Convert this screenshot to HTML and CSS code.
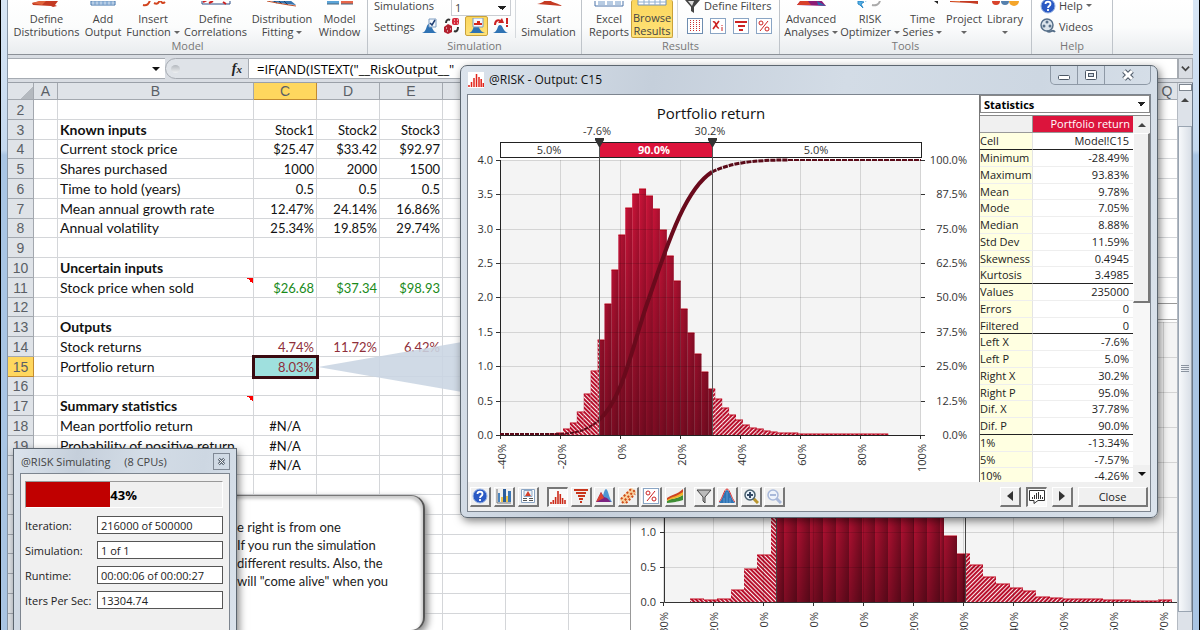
FILE: index.html
```html
<!DOCTYPE html>
<html lang="en">
  <head>
    <meta charset="UTF-8" />
    <title>@RISK - Output: C15</title>
    <link rel="stylesheet" href="styles.css">
  </head>

  <body>
    <div class="app">
      <header class="ribbon">
        <section class="group">
          <div class="group-body model-grid">
            <button class="big">
              <svg class="big-icon" viewBox="0 0 40 11"><path d="M5 2l8-2h18l-3 4 2 1-4 1-2-1-18-1z" fill="#c43a22"/><path d="M5 2l8-2h6l-4 4z" fill="#e0643c"/></svg>
              Define<br>Distributions
            </button>
            <button class="big">
              <svg class="big-icon" viewBox="0 0 40 11"><path d="M8 0h24v4H8z" fill="#fff" stroke="#3b6ea8"/><path d="M12 0v4m4-4v4m4-4v4m4-4v4m4-4v4M8 2h24" stroke="#6d9acb"/></svg>
              Add<br>Output
            </button>
            <button class="big">
              <svg class="big-icon" viewBox="0 0 40 11"><path d="M10 4c4 1 6-1 7-5M21 2c4 2 5-1 6-3m1 0c0 3 2 4 4 2" fill="none" stroke="#d2441f" stroke-width="2"/></svg>
              Insert<br>Function <i class="caret"></i>
            </button>
            <button class="big">
              <svg class="big-icon" viewBox="0 0 40 11"><path d="M6-1v4h28v-4" fill="#fff" stroke="#2f4f86"/><path d="M7 1l4-2m2 3l4-2m10 1l3 2" stroke="#c22" stroke-width="2"/></svg>
              Define<br>Correlations
            </button>
            <button class="big">
              <svg class="big-icon" viewBox="0 0 40 11"><path d="M6-1h22l6 5-10-1-12-2z" fill="#3776b0"/><path d="M12 0l3 2m2-2l3 3m2-3l4 4" stroke="#193f6b"/><path d="M5 0l10 2 12 2 7 1" fill="none" stroke="#c0522b"/></svg>
              Distribution<br>Fitting <i class="caret"></i>
            </button>
            <button class="big">
              <svg class="big-icon" viewBox="0 0 40 11"><path d="M7-1h12v4H7z" fill="#5ba4d8"/><path d="M21-1h12v4H21z" fill="#e8674b"/><path d="M7 3h12m2 0h12" stroke="#49667f"/></svg>
              Model<br>Window
            </button>
          </div>
          <h2>Model</h2>
        </section>

        <section class="group">
          <div class="group-body">
            <div class="stack sim-stack">
              <div class="line">
                <label for="simulations">Simulations</label>
                <select id="simulations"><option>1</option></select>
              </div>
              <div class="line">
                <button class="small">Settings</button>
                <div class="icon-row">
                  <button class="mini" aria-label="Simulation settings"><svg viewBox="0 0 16 16"><path d="M1 15c5-1 4-9 7-9s3 8 8 9z" fill="#2f73b4"/><path d="M8 1h7v8H8z" fill="#f4f9ff" stroke="#7c9cc0"/><path d="M9 5l2 2 3-5" fill="none" stroke="#1f3f74" stroke-width="1.5"/></svg></button>
                  <button class="mini" aria-label="Random or static"><svg viewBox="0 0 16 16"><rect x="8" y="0" width="7" height="7" rx="2" fill="#d5283a"/><path d="M10 2h1m2 0h1m-4 3h1m2 0h1" stroke="#fff"/><path d="M0 9l4-3 4 2v6l-4 2-4-2z" fill="#b3202e"/><path d="M2 10h1m0 3h1m2-2h1" stroke="#fff"/><path d="M2 5c0-3 2-4 4-3M14 9c0 4-2 5-4 4" fill="none" stroke="#333" stroke-width="2"/></svg></button>
                  <button class="mini on" aria-label="Show graph during simulation"><svg viewBox="0 0 16 16"><path d="M0 15c5-1 4-9 7-9s3 8 9 9z" fill="#2f73b4"/><path d="M4 0h10v9H4z" fill="#f4f9ff" stroke="#7c9cc0"/><path d="M5 7h8V5h-2V3H8v2H5z" fill="#d42a1e"/></svg></button>
                  <button class="mini" aria-label="Demo mode"><svg viewBox="0 0 16 16"><path d="M0 15c5-1 4-8 7-8s3 7 8 8z" fill="#2f73b4"/><path d="M2 7c0-5 4-6 6-3" fill="none" stroke="#c22" stroke-width="2"/><path d="M5 5h6L9 0z" fill="#c22"/><path d="M14 0v6m0 1v2" stroke="#c22" stroke-width="2"/></svg></button>
                </div>
              </div>
            </div>
            <button class="big start">
              <svg class="big-icon" viewBox="0 0 40 11"><path d="M8 3c4-1 7-2 8-4h5c2 3 8 3 12 6-8-1-16-1-25-2z" fill="#c43a22"/></svg>
              Start<br>Simulation
            </button>
          </div>
          <h2>Simulation</h2>
        </section>

        <section class="group">
          <div class="group-body">
            <div class="results-grid">
              <button class="big">
                <svg class="big-icon" viewBox="0 0 40 11"><path d="M6-1h28v6H6z" fill="#fff" stroke="#4a73a8"/><path d="M9 1h7m2 0h6m2 0h6M9 3h7m2 0h6m2 0h6" stroke="#6f97c6"/></svg>
                Excel<br>Reports
              </button>
              <button class="big on">
                <svg class="big-icon" viewBox="0 0 40 11"><path d="M6-1h28v6H6z" fill="#fff" stroke="#7391b5"/><path d="M6 2h28M12 0v5m5-5v5m6-5v5m5-5v5" stroke="#8faed0"/></svg>
                Browse<br>Results
              </button>
            </div>
            <div class="stack filter-stack">
              <div class="line">
                <button class="small"><svg viewBox="0 0 16 16"><path d="M0 2h15L9 9v6l-3-2V9z" fill="#444"/><path d="M3 3h6L7 8z" fill="#ddd"/></svg>Define Filters</button>
              </div>
              <div class="line icon-row">
                <button class="mini" aria-label="Data"><svg viewBox="0 0 16 16"><rect x=".5" y=".5" width="15" height="15" fill="#fff" stroke="#6e8db0"/><path d="M3.500 2v12m3-12v12m3-12v12m3-12v12" stroke="#c33" stroke-dasharray="1 1"/></svg></button>
                <button class="mini" aria-label="Variables"><svg viewBox="0 0 16 16"><rect x=".5" y=".5" width="15" height="15" fill="#fff" stroke="#8aa5c4"/><path d="M3 4c3-2 3 7 6 6M9 3L3 11" fill="none" stroke="#c22" stroke-width="1.600"/><path d="M12 9v4m0-6v1" stroke="#c22"/></svg></button>
                <button class="mini" aria-label="Tornado"><svg viewBox="0 0 16 16"><rect x=".5" y=".5" width="15" height="15" fill="#fff" stroke="#8aa5c4"/><path d="M2 4h12M5 8h7M6 12h4" stroke="#c22" stroke-width="2"/></svg></button>
                <button class="mini" aria-label="Percentiles"><svg viewBox="0 0 16 16"><rect x=".5" y=".5" width="15" height="15" fill="#fff" stroke="#8aa5c4"/><path d="M12 3L4 13" stroke="#c22"/><circle cx="5" cy="5" r="2" fill="none" stroke="#c22"/><circle cx="11" cy="11" r="2" fill="none" stroke="#c22"/></svg></button>
              </div>
            </div>
          </div>
          <h2>Results</h2>
        </section>

        <section class="group">
          <div class="group-body tools-grid">
            <button class="big">
              <svg class="big-icon" viewBox="0 0 40 11"><path d="M6 4l4-5h20l5 6z" fill="#8d1c76"/><path d="M6 4l4-5h6l4 5z" fill="#d8402a"/><path d="M26 0l9 5-8-1z" fill="#2b66ad"/></svg>
              Advanced<br>Analyses <i class="caret"></i>
            </button>
            <button class="big">
              <svg class="big-icon" viewBox="0 0 40 11"><path d="M8 0l6 1-3 2 2 4-3-3-2-1zM15 0l4-1" stroke="#2d8ac9" fill="#56b0e4"/><path d="M22 4c4 1 7-1 8-4" fill="none" stroke="#aaa" stroke-width="2"/></svg>
              RISK<br>Optimizer <i class="caret"></i>
            </button>
            <button class="big">
              <svg class="big-icon" viewBox="0 0 40 11"><path d="M31 0l4-1v4z" fill="#222"/></svg>
              Time<br>Series <i class="caret"></i>
            </button>
            <button class="big">
              <svg class="big-icon" viewBox="0 0 40 11"><path d="M6 0h28v3l-8-1-20-1z" fill="#c43a22"/><path d="M6 0h10v1z" fill="#f08a4a"/></svg>
              Project<br><i class="caret"></i>
            </button>
            <button class="big">
              <svg class="big-icon" viewBox="0 0 40 11"><circle cx="11" cy="0" r="4" fill="#d8432c"/><circle cx="20" cy="0" r="4" fill="#5580ad"/><circle cx="29" cy="0" r="5" fill="#f4a52a"/></svg>
              Library<br><i class="caret"></i>
            </button>
          </div>
          <h2>Tools</h2>
        </section>

        <section class="group">
          <div class="group-body">
            <div class="stack help-stack">
              <div class="line">
                <button class="small"><svg viewBox="0 0 16 16"><circle cx="8" cy="8" r="7" fill="#2a59c4" stroke="#9ab5e4"/><path d="M5.500 6c0-3 5-3 5 0 0 2-2.500 2-2.500 4m0 1v2" fill="none" stroke="#fff" stroke-width="1.800"/></svg>Help <i class="caret"></i></button>
              </div>
              <div class="line">
                <button class="small"><svg viewBox="0 0 16 16"><circle cx="7" cy="7" r="6" fill="#dbe4ec" stroke="#57708a" stroke-width="1.500"/><circle cx="7" cy="4" r="1.500" fill="#57708a"/><circle cx="4" cy="8" r="1.500" fill="#57708a"/><circle cx="10" cy="8" r="1.500" fill="#57708a"/><path d="M7 13c4 3 5-3 8 1" fill="none" stroke="#57708a" stroke-width="2"/></svg>Videos</button>
              </div>
            </div>
          </div>
          <h2>Help</h2>
        </section>
      </header>

      <div class="formula-bar">
        <div class="name-box"><input type="text" aria-label="Name box"><i class="caret dark"></i></div>
        <div class="fx"><span class="knob"></span><em>f<small>x</small></em></div>
        <input class="formula" type="text" aria-label="Formula" value="=IF(AND(ISTEXT(&quot;__RiskOutput__&quot;">
        <button class="expand" aria-label="Expand formula bar"><svg viewBox="0 0 10 10"><path d="M1 3l4 4 4-4" fill="none" stroke="#444" stroke-width="2"/></svg></button>
      </div>

      <main class="workspace">
        <div class="sheet">
          <table class="cells">
            <colgroup>
              <col class="col-head"><col class="col-a"><col class="col-b"><col span="15">
            </colgroup>
            <thead>
              <tr><th class="corner"></th><th>A</th><th>B</th><th class="active">C</th><th>D</th><th>E</th><th colspan="11"></th><th>Q</th></tr>
            </thead>
            <tbody id="rows"></tbody>
          </table>

          <svg class="wedge" viewBox="0 0 144 50"><path d="M0 25L144 0v50z" fill="#c9d5e2" fill-opacity=".88"/></svg>

          <div class="note">
            <p>e right is from one<br>If you run the simulation<br>different results. Also, the<br>will "come alive" when you</p>
          </div>

          <div class="sheet-chart"><svg id="sheetChart" width="546" height="340"></svg></div>
        </div>
        <div class="vscroll">
          <span class="split"></span>
          <i class="arrow-up"></i>
          <div class="thumb"><span class="grip"></span></div>
        </div>
      </main>
    </div>

    <section class="window output">
      <div class="titlebar">
        <svg class="logo" viewBox="0 0 16 16"><path fill="#fff" d="M0 0h16v16H0z"/><path d="M1 15v-2M3.500 15v-5M6 15V6M8.500 15V2M11 15V5M13.200 15V7M15.300 15v-4" stroke="#e2231a" stroke-width="1.500"/></svg>
        <h1>@RISK - Output: C15</h1>
        <div class="caption-buttons">
          <button aria-label="Minimize"><svg viewBox="0 0 14 12"><rect x="1.500" y="6.500" width="11" height="4" rx="1" fill="#fff" stroke="#4d5866"/></svg></button>
          <button aria-label="Maximize"><svg viewBox="0 0 14 12"><rect x="1.500" y="1.500" width="11" height="9" rx="1" fill="#fff" stroke="#4d5866"/><rect x="4.500" y="4.500" width="5" height="3" fill="#c9d3de" stroke="#4d5866"/></svg></button>
          <button class="x" aria-label="Close window"><svg viewBox="0 0 14 12"><path d="M3 2l8 8m0-8l-8 8" stroke="#4d5866" stroke-width="5"/><path d="M3 2l8 8m0-8l-8 8" stroke="#fff" stroke-width="3"/></svg></button>
        </div>
      </div>
      <div class="client">
        <div class="output-body">
          <svg id="outputChart" width="511" height="387"></svg>
          <aside class="stats">
            <select aria-label="Report type"><option>Statistics</option></select>
            <div class="stats-scroll">
              <table>
                <thead><tr><th></th><th>Portfolio return</th></tr></thead>
                <tbody id="stats"></tbody>
              </table>
              <div class="classic-scroll">
                <button aria-label="Scroll up"><i class="arrow-up"></i></button>
                <div class="classic-thumb"></div>
                <button class="down" aria-label="Scroll down"><i class="caret dark"></i></button>
              </div>
            </div>
          </aside>
        </div>
        <div class="toolbar">
          <div class="tools three">
            <button aria-label="Help"><svg viewBox="0 0 16 16"><circle cx="8" cy="8" r="7" fill="#2a59c4" stroke="#9ab5e4"/><path d="M5.500 6c0-3 5-3 5 0 0 2-2.500 2-2.500 4m0 1v2" fill="none" stroke="#fff" stroke-width="1.800"/></svg></button>
            <button aria-label="Chart options"><svg viewBox="0 0 16 16"><path d="M1 1v14h14" fill="none" stroke="#777"/><path d="M2 5h2v9H2z" fill="#4d86bf"/><path d="M5 9h2v5H5z" fill="#ecc54a"/><path d="M7 1h3v13H7z" fill="#2a5d9c"/><path d="M10 8h2v6h-2z" fill="#ecc54a"/><path d="M12 3h3v11h-3z" fill="#3b76b5"/></svg></button>
            <button aria-label="Copy report"><svg viewBox="0 0 16 16"><path d="M1.500 1.500h13v13h-13z" fill="#fff" stroke="#8aa5c4"/><path d="M4 2.500h8v6H4z" fill="#eef3f8" stroke="#8aa5c4"/><path d="M8 3l3 5H5z" fill="#d5402a"/><path d="M3 10.500h4m2 0h4M3 12.500h4m2 0h4" stroke="#555"/></svg></button>
          </div>
          <div class="tools six">
            <button class="pressed" aria-label="Histogram"><svg viewBox="0 0 16 16"><path d="M1 15v-2M3.300 15v-4M5.600 15V8M8 15V2M10.300 15V5M12.600 15V9M15 15v-4" stroke="#cc2a18" stroke-width="1.600"/></svg></button>
            <button aria-label="Tornado graph"><svg viewBox="0 0 16 16"><path d="M1 2h14M3 5h10M5 8h7M6 11h4M7 14h2" stroke="#c8351c" stroke-width="2"/></svg></button>
            <button aria-label="Overlay"><svg viewBox="0 0 16 16"><path d="M4 14c3-3 4-13 6-13s3 9 6 13z" fill="#4f96d2"/><path d="M0 14L5 4l3 5 3 1 4 4z" fill="#7d2281"/><path d="M0 14L5 4l3 6z" fill="#db4433"/></svg></button>
            <button aria-label="Scatter plot"><svg viewBox="0 0 16 16"><path d="M2 14L14 2" stroke="#f8cf9e" stroke-width="7"/><path d="M2 15L15 2M1 11L11 1M6 15l9-9" stroke="#cf4a18" stroke-width="2" stroke-dasharray="2 2"/></svg></button>
            <button aria-label="Summary"><svg viewBox="0 0 16 16"><rect x=".5" y=".5" width="15" height="15" fill="#fff" stroke="#8aa5c4"/><path d="M12 3L4 13" stroke="#c22"/><circle cx="5" cy="5" r="2" fill="none" stroke="#c22"/><circle cx="11" cy="11" r="2" fill="none" stroke="#c22"/></svg></button>
            <button aria-label="Trend"><svg viewBox="0 0 16 16"><path d="M0 13c6-4 8-1 16-6v5C9 14 8 14 0 15z" fill="#3f8f36"/><path d="M0 11C6 8 9 8 16 3v4c-7 4-9 3-16 6z" fill="#f0b52a"/><path d="M0 10c6-4 9-3 16-9v3C9 9 6 8 0 12z" fill="#cf4322"/></svg></button>
          </div>
          <div class="tools four">
            <button aria-label="Filter"><svg viewBox="0 0 16 16"><path d="M1 2h14L9 9v6l-2-2V9z" fill="#bbb" stroke="#444"/></svg></button>
            <button aria-label="Fit distribution"><svg viewBox="0 0 16 16"><path d="M0 15C4 11 5 2 8 2s4 9 8 13z" fill="#2f73b4"/><path d="M0 14C4 10 5 1 8 1s4 9 8 13" fill="none" stroke="#d33"/><path d="M5 10v5m3-11v11m3-5v5" stroke="#5d9bd3"/></svg></button>
            <button aria-label="Zoom in"><svg viewBox="0 0 16 16"><path d="M10 10l5 5" stroke="#b8952d" stroke-width="3"/><circle cx="7" cy="7" r="5" fill="#e8f2fb" stroke="#49606f" stroke-width="1.500"/><path d="M4 7h6M7 4v6" stroke="#334a66" stroke-width="2"/></svg></button>
            <button aria-label="Zoom out" disabled><svg viewBox="0 0 16 16"><path d="M10 10l5 5" stroke="#a9b9da" stroke-width="3"/><circle cx="7" cy="7" r="5" fill="#eef3fb" stroke="#a9b9da" stroke-width="1.500"/><path d="M4 7h6" stroke="#a9b9da" stroke-width="2"/></svg></button>
          </div>
          <div class="pager">
            <button aria-label="Previous"><svg viewBox="0 0 16 16"><path d="M11 3v10L5 8z" fill="#333"/></svg></button>
            <button class="pressed" aria-label="Callout"><svg viewBox="0 0 16 16"><path d="M.5 1.500h15v10H9l-4 3v-3H.5z" fill="#fff" stroke="#333"/><path d="M3.500 10V8M5.500 10V6M7.500 10V4M9.500 10V3M11.500 10V6M13.500 10V8" stroke="#333"/></svg></button>
            <button aria-label="Next"><svg viewBox="0 0 16 16"><path d="M5 3v10l6-5z" fill="#333"/></svg></button>
            <button class="close">Close</button>
          </div>
        </div>
      </div>
    </section>

    <section class="window progress-window">
      <div class="titlebar">
        <h1>@RISK Simulating <span>(8 CPUs)</span></h1>
        <button class="tiny-x" aria-label="Close progress"><svg viewBox="0 0 10 10"><path d="M2 2l6 6m0-6L2 8" stroke="#5d6875" stroke-width="3"/><path d="M2 2l6 6m0-6L2 8" stroke="#fff"/></svg></button>
      </div>
      <div class="client">
        <div class="bar"><div class="bar-fill"></div><strong>43%</strong></div>
        <div class="field"><label for="iteration">Iteration:</label><input id="iteration" type="text" value="216000 of 500000"></div>
        <div class="field"><label for="simulation">Simulation:</label><input id="simulation" type="text" value="1 of 1"></div>
        <div class="field"><label for="runtime">Runtime:</label><input id="runtime" type="text" value="00:00:06 of 00:00:27"></div>
        <div class="field"><label for="ips">Iters Per Sec:</label><input id="ips" type="text" value="13304.74"></div>
      </div>
    </section>

    <script src="script.js"></script>
  </body>
</html>
```
FILE: styles.css
```css
* {
  box-sizing: border-box;
}

body {
  margin: 0;
  height: 100vh;
  overflow: hidden;
  position: relative;
  font-family: "Open Sans", "Noto Sans", sans-serif;
  font-size: 11px;
  color: #222;
}

button,
input,
select {
  font: inherit;
  color: inherit;
  margin: 0;
  padding: 0;
  border: 0;
  border-radius: 0;
  background: none;
}

h1,
h2,
p {
  margin: 0;
  font-weight: normal;
}

svg {
  display: block;
}

.app {
  height: 100%;
  display: flex;
  flex-direction: column;
  padding: 0 6px;
  border-left: 1px solid #000;
  border-right: 1px solid #000;
  background: linear-gradient(#d8e6f5 0, #c4d8ee 150px, #a9c5e4 155px);
}

/* ribbon */
.ribbon {
  flex: none;
  height: 55px;
  display: flex;
  background: linear-gradient(#fff, #fbfcfc 50%, #e9ecef);
  border-bottom: 1px solid #8b9097;
  border-left: 1px solid #8795a5;
  line-height: 13px;
  color: #444;
}

.group {
  display: flex;
  flex-direction: column;
  border-right: 1px solid #bfc4ca;
}

.group-body {
  display: flex;
  height: 38px;
}

.group h2 {
  font-size: 11px;
  line-height: 16px;
  text-align: center;
  color: #777;
}

.model-grid {
  display: grid;
  grid-template-columns: 71px 42px 58px 67px 66px 49px;
  padding: 0 3px;
}

.tools-grid {
  display: grid;
  grid-template-columns: 56px 62px 43px 40px 42px;
  padding: 0 5px 0 3px;
}

.results-grid {
  display: grid;
  grid-template-columns: 44px 42px;
  padding: 0 4px 0 5px;
  border-right: 1px solid #d5d9dd;
}

.big {
  display: flow-root;
  text-align: center;
  white-space: nowrap;
  line-height: 13px;
}

.big-icon {
  width: 40px;
  height: 11px;
  margin: 0 auto;
}

.start {
  width: 65px;
}

.big.on,
.mini.on {
  background: linear-gradient(#fbd65c, #ffe278);
  border: 1px solid #c9a23a;
  border-radius: 2px;
}

.big.on {
  border-top: 0;
}

.caret {
  display: inline-block;
  border: 3px solid transparent;
  border-top: 3px solid #666;
  border-bottom: 0;
  vertical-align: middle;
}

.caret.dark {
  border-width: 4px;
  border-bottom: 0;
  border-top-color: #111;
}

.arrow-up {
  display: block;
  border: 4px solid transparent;
  border-bottom-color: #444;
  border-top: 0;
}

.stack {
  display: flex;
  flex-direction: column;
}

.line {
  display: flex;
  align-items: center;
  height: 22px;
}

.line:first-child {
  height: 15px;
  padding-bottom: 4px;
}

.sim-stack {
  width: 148px;
  padding-left: 6px;
  border-right: 1px solid #d5d9dd;
}

.sim-stack .line {
  justify-content: space-between;
  padding-right: 4px;
}

select {
  appearance: none;
  background: #fff conic-gradient(from 315deg at 4px 4px, #222 90deg, transparent 0) no-repeat right 4px center / 8px 4px;
}

.sim-stack select {
  width: 60px;
  height: 16px;
  padding-left: 3px;
  align-self: flex-start;
  border: 1px solid #c9cdd2;
  border-top: 0;
}

.icon-row {
  display: flex;
  gap: 3px;
}

.mini {
  width: 20px;
  height: 20px;
  display: grid;
  place-items: center;
}

.mini svg,
.small svg {
  width: 16px;
  height: 16px;
}

.sim-stack .mini.on {
  width: 23px;
}

.small {
  display: flex;
  align-items: center;
  gap: 3px;
  white-space: nowrap;
}

.filter-stack {
  padding: 0 5px 0 7px;
}

.help-stack {
  width: 80px;
  padding-left: 8px;
}

/* formula bar */
.formula-bar {
  flex: none;
  height: 28px;
  display: flex;
  padding: 3px 0;
  background: #d9dde3;
  border-left: 1px solid #8795a5;
  border-bottom: 1px solid #9aa0a8;
}

.name-box {
  width: 157px;
  display: flex;
  align-items: center;
  background: #fff;
  border: 1px solid #a6abb2;
  border-left: 0;
  border-right: 0;
}

.name-box input {
  flex: 1;
  min-width: 0;
}

.name-box .caret {
  margin-right: 5px;
}

.fx {
  width: 84px;
  display: flex;
  align-items: center;
  justify-content: space-between;
  padding: 0 6px 0 5px;
  border: 1px solid #a6abb2;
  border-radius: 11px 0 0 11px;
  background: #dfe3e8;
  font-family: "Liberation Serif", serif;
  font-size: 14px;
  font-weight: bold;
}

.fx small {
  font-size: 11px;
}

.knob {
  width: 9px;
  height: 8px;
  border-radius: 50%;
  background: linear-gradient(#b3b8be, #eef0f2);
}

.formula {
  flex: 1;
  min-width: 0;
  padding-left: 8px;
  font-size: 13px;
  color: #000;
  background: #fff;
  border: 1px solid #a6abb2;
  border-left: 0;
}

.expand {
  width: 15px;
  display: grid;
  place-items: center;
  border: 1px solid #a6abb2;
}

.expand svg {
  width: 9px;
}

/* worksheet */
.workspace {
  flex: 1;
  min-height: 0;
  display: flex;
  border-left: 1px solid #8795a5;
  border-right: 1px solid #6b7888;
}

.sheet {
  flex: 1;
  min-width: 0;
  position: relative;
  overflow: hidden;
  background: #fff;
}

.cells {
  width: 1191px;
  table-layout: fixed;
  border-collapse: separate;
  border-spacing: 0;
  font-family: Lato, sans-serif;
  font-size: 14px;
  line-height: 16px;
  color: #111;
}

.col-head {
  width: 26px;
}

.col-a {
  width: 24px;
}

.col-b {
  width: 196px;
}

.cells th {
  padding: 0;
  font: 14px "Liberation Sans", sans-serif;
  line-height: 16px;
  color: #5a5f66;
  background: #dfe3e8;
  border-right: 1px solid #a3a8af;
  border-bottom: 1px solid #a3a8af;
}

.cells thead th {
  height: 17px;
}

.cells .corner {
  background: linear-gradient(135deg, #dfe3e8 70%, #b4b9bf 70%);
}

.cells th.active {
  background: #ffd75e;
  border-color: #c28a30;
}

.cells td {
  height: 20px;
  padding: 0 2px;
  white-space: nowrap;
  border-right: 1px solid #d4d6d9;
  border-bottom: 1px solid #d4d6d9;
}

.cells tr:nth-child(4n + 3) td {
  height: 19px;
}

.cells .num {
  text-align: right;
  font-size: 13px;
}

.cells .center {
  text-align: center;
  font-size: 13px;
}

.cells .green {
  color: #1a8a1a;
}

.cells .maroon {
  color: #8f2f3a;
}

.cells .comment {
  background: linear-gradient(45deg, transparent 50%, #f00 50%) top right / 6px 6px no-repeat;
}

.cells .selected {
  background: #9fe0de;
  outline: 3px solid #3a0a10;
  outline-offset: -1px;
}

.wedge {
  position: absolute;
  left: 310px;
  top: 259px;
  width: 144px;
  height: 50px;
}

.note {
  position: absolute;
  left: 60px;
  top: 412px;
  width: 357px;
  height: 136px;
  padding: 22px 20px 0 168px;
  background: #fff;
  border: 1px solid #777;
  border-radius: 14px;
  border-right: 2px solid #555;
  box-shadow: 3px 3px 7px #888, inset -2px 3px 3px #ccc;
  font-family: Lato, sans-serif;
  font-size: 13px;
  line-height: 18px;
  white-space: nowrap;
}

.sheet-chart {
  position: absolute;
  left: 622px;
  top: 220px;
  background: #fff;
  border: 1px solid #999;
}

.vscroll {
  width: 15px;
  display: flex;
  flex-direction: column;
  align-items: center;
  background: #dde2e9;
  border-left: 1px solid #b4bac2;
}

.split {
  width: 13px;
  height: 7px;
  margin: 1px 0 7px;
  background: #fff;
  border: 1px solid #7d858f;
}

.thumb {
  width: 14px;
  flex: 1;
  margin: 24px 0 18px;
  display: grid;
  place-items: center;
  background: linear-gradient(90deg, #f7f9fb, #d9dfe7);
  border: 1px solid #9aa5b2;
}

.grip {
  width: 8px;
  height: 8px;
  background: repeating-linear-gradient(#8b94a0 0 1px, transparent 1px 2px);
}

/* floating windows */
.window {
  position: absolute;
  background: linear-gradient(100deg, #dbe3ec, #c5cfdb 25%, #d3dce6 50%, #cdd7e2 75%, #dbe3ec);
  border: 1px solid #5c6670;
  box-shadow: 2px 3px 8px rgba(0, 0, 0, 0.5);
}

.titlebar {
  display: flex;
}

.titlebar h1 {
  flex: 1;
}

.client {
  background: #f0f0f0;
  border: 1px solid #7d858f;
}

.output {
  left: 460px;
  top: 65px;
  width: 698px;
  padding: 0 6px 5px;
  border-radius: 7px;
}

.output .titlebar {
  height: 28px;
  gap: 5px;
  padding-left: 1px;
}

.output h1 {
  font-size: 12px;
  line-height: 27px;
  color: #111;
}

.logo {
  width: 16px;
  height: 16px;
  margin-top: 6px;
}

.caption-buttons {
  display: flex;
  height: 19px;
  border: 1px solid #8e99a6;
  border-top: 0;
  border-radius: 0 0 5px 5px;
}

.caption-buttons button {
  width: 27px;
  display: grid;
  place-items: center;
  border-right: 1px solid #8e99a6;
}

.caption-buttons .x {
  width: 45px;
  border: 0;
}

.caption-buttons svg {
  width: 14px;
  height: 12px;
}

.output-body {
  display: flex;
  height: 387px;
  background: #fff;
}

.output-body > svg {
  flex: none;
}

text {
  font-family: "Open Sans", "Noto Sans", sans-serif;
  font-size: 11px;
  fill: #333;
}

.chart-title {
  font-size: 15px;
  fill: #111;
}

.band-label {
  font-weight: bold;
  fill: #fff;
}

.stats {
  flex: 1;
  min-width: 0;
  display: flex;
  flex-direction: column;
  border-left: 1px solid #777;
}

.stats select {
  height: 18px;
  margin-bottom: 2px;
  padding-left: 3px;
  font-weight: bold;
  color: #000;
  border: 1px solid #888;
}

.stats-scroll {
  flex: 1;
  min-height: 0;
  display: flex;
  overflow: hidden;
  border-top: 1px solid #888;
}

.stats table {
  flex: 1;
  table-layout: fixed;
  border-collapse: separate;
  border-spacing: 0;
  line-height: 14px;
  align-self: flex-start;
}

.stats th {
  height: 17px;
  padding: 0 3px 0 0;
  font-weight: normal;
  text-align: right;
  color: #fff;
  background: #dc143c;
  border-bottom: 1px solid #999;
}

.stats th:first-child {
  width: 52px;
  background: #f0f0f0;
  border-right: 1px solid #999;
}

.stats td {
  height: 17px;
  padding: 0 4px 0 0;
  border-bottom: 1px solid #eee;
}

.stats tr:nth-child(4n) td {
  height: 16px;
}

.stats td:first-child {
  padding-right: 0;
  background: #ffffe1;
  border-right: 1px solid #e4e4e4;
}

.stats td:last-child {
  text-align: right;
}

.stats .rule td {
  border-bottom-color: #222;
}

.classic-scroll {
  width: 17px;
  display: flex;
  flex-direction: column;
  background: #f7f7f7;
}

.classic-scroll button {
  height: 17px;
  display: grid;
  place-items: center;
  background: #f0f0f0;
}

.classic-scroll .down {
  margin-top: auto;
}

.classic-thumb {
  height: 170px;
  background: #f0f0f0;
  border: 1px solid #fff;
  border-right: 2px solid #777;
  border-bottom: 2px solid #777;
}

.toolbar {
  display: flex;
  align-items: center;
  height: 29px;
  padding: 0 2px;
}

.tools {
  display: flex;
  justify-content: space-between;
  margin-right: 8px;
}

.three {
  width: 69px;
}

.six {
  width: 139px;
}

.four {
  width: 91px;
}

.toolbar button {
  width: 21px;
  height: 20px;
  display: grid;
  place-items: center;
  background: #f0f0f0;
  border: 1px solid #fff;
  border-right: 2px solid #777;
  border-bottom: 2px solid #777;
}

.toolbar .pressed {
  background: #fafafa;
  border: 1px solid #fff;
  border-left: 2px solid #777;
  border-top: 2px solid #777;
}

.toolbar svg {
  width: 16px;
  height: 16px;
}

.pager {
  display: flex;
  gap: 5px;
  margin-left: auto;
}

.toolbar .close {
  width: 70px;
}

.progress-window {
  left: 13px;
  top: 448px;
  width: 224px;
  height: 200px;
  padding: 0 6px;
}

.progress-window .titlebar {
  height: 24px;
  padding-left: 1px;
}

.progress-window h1 {
  font-size: 11px;
  line-height: 25px;
  color: #444;
}

.progress-window h1 span {
  margin-left: 11px;
}

.tiny-x {
  width: 17px;
  height: 17px;
  margin-top: 4px;
  display: grid;
  place-items: center;
  border: 1px solid #808995;
}

.tiny-x svg {
  width: 9px;
}

.progress-window .client {
  height: 176px;
  padding: 7px 6px 0 4px;
}

.bar {
  display: flex;
  align-items: center;
  height: 27px;
  margin-bottom: 8px;
  border: 1px solid #999;
  border-right-color: #fff;
  border-bottom-color: #fff;
  font-size: 13px;
  color: #000;
}

.bar-fill {
  width: 43%;
  height: 100%;
  background: #c00000;
}

.field {
  display: flex;
  align-items: center;
  justify-content: space-between;
  height: 18px;
  margin-bottom: 7px;
}

.field input {
  width: 126px;
  height: 18px;
  padding-left: 3px;
  background: #fff;
  border: 1px solid #555;
}
```
FILE: script.js
```js
const sheetRows = {
  3: ["Known inputs", "Stock1", "Stock2", "Stock3"],
  4: ["Current stock price", "$25.47", "$33.42", "$92.97"],
  5: ["Shares purchased", "1000", "2000", "1500"],
  6: ["Time to hold (years)", "0.5", "0.5", "0.5"],
  7: ["Mean annual growth rate", "12.47%", "24.14%", "16.86%"],
  8: ["Annual volatility", "25.34%", "19.85%", "29.74%"],
  10: ["Uncertain inputs"],
  11: ["Stock price when sold", "$26.68", "$37.34", "$98.93"],
  13: ["Outputs"],
  14: ["Stock returns", "4.74%", "11.72%", "6.42%"],
  15: ["Portfolio return", "8.03%"],
  17: ["Summary statistics"],
  18: ["Mean portfolio return", "#N/A"],
  19: ["Probability of positive return", "#N/A"],
  20: ["", "#N/A"],
};
const headings = [3, 10, 13, 17];
const comments = [11, 17];

function renderSheet() {
  let html = "";
  for (let r = 2; r <= 29; r++) {
    const data = sheetRows[r] || [];
    const label = headings.includes(r) ? `<b>${data[0]}</b>` : data[0] || "";
    html += `<tr><th class="${r === 15 ? "active" : ""}">${r < 20 ? r : ""}</th><td></td>`;
    html += `<td class="${comments.includes(r) ? "comment" : ""}">${label}</td>`;
    for (let c = 1; c <= 15; c++) {
      const cls = [r >= 18 ? "center" : "num"];
      if (r === 11) cls.push("green");
      if (r === 14 || r === 15) cls.push("maroon");
      if (r === 15 && c === 1) cls.push("selected");
      html += `<td class="${cls.join(" ")}">${data[c] || ""}</td>`;
    }
    html += "</tr>";
  }
  document.getElementById("rows").innerHTML = html;
}

// third item marks the last row of a block
const stats = [
  ["Cell", "Model!C15", 1],
  ["Minimum", "-28.49%"],
  ["Maximum", "93.83%"],
  ["Mean", "9.78%"],
  ["Mode", "7.05%"],
  ["Median", "8.88%"],
  ["Std Dev", "11.59%"],
  ["Skewness", "0.4945"],
  ["Kurtosis", "3.4985", 1],
  ["Values", "235000"],
  ["Errors", "0"],
  ["Filtered", "0", 1],
  ["Left X", "-7.6%"],
  ["Left P", "5.0%"],
  ["Right X", "30.2%"],
  ["Right P", "95.0%"],
  ["Dif. X", "37.78%"],
  ["Dif. P", "90.0%", 1],
  ["1%", "-13.34%"],
  ["5%", "-7.57%"],
  ["10%", "-4.26%"],
];

function renderStats() {
  document.getElementById("stats").innerHTML = stats
    .map(([k, v, end]) => `<tr class="${end ? "rule" : ""}"><td>${k}</td><td>${v}</td></tr>`)
    .join("");
}

function defs(id, side) {
  return `
    <defs>
      <linearGradient id="${id}Side"><stop offset="0" stop-opacity="0"/><stop offset="1" stop-opacity="${side}"/></linearGradient>
      <linearGradient id="${id}Down" x1="0" y1="0" x2="0" y2="1"><stop offset="0" stop-opacity="0"/><stop offset="1" stop-opacity=".4"/></linearGradient>
      <pattern id="${id}HatchL" width="3" height="3" patternUnits="userSpaceOnUse" patternTransform="rotate(-45)"><rect width="1" height="3" fill="#fbeeee"/></pattern>
      <pattern id="${id}HatchR" width="3" height="3" patternUnits="userSpaceOnUse" patternTransform="rotate(45)"><rect width="1" height="3" fill="#fbeeee"/></pattern>
    </defs>`;
}

// bars: [x, width, height]; lo and hi split solid from hatched
function drawBars(id, bars, base, lo, hi, top) {
  let out = "";
  const piece = (x, w, h, hatch) => {
    const box = `x="${x}" y="${base - h}" width="${w}" height="${h}"`;
    if (hatch) {
      out += `<rect ${box} fill="#b80f2c"/><rect ${box} fill="url(#${id}Hatch${hatch})"/>`;
    } else {
      out += `<rect ${box} fill="#d3143b"/><rect ${box} fill="url(#${id}Side)"/>`;
    }
    out += `<path d="M${x} ${base - h}h${w}" stroke="#c00018"/>`;
  };
  bars.forEach(([x, w, h]) => {
    const cuts = [x, lo, hi, x + w].filter((v) => v >= x && v <= x + w);
    for (let i = 0; i < cuts.length - 1; i++) {
      const mid = (cuts[i] + cuts[i + 1]) / 2;
      piece(cuts[i], cuts[i + 1] - cuts[i], h, mid < lo ? "L" : mid > hi ? "R" : "");
    }
  });
  return out + `<clipPath id="${id}Clip">${bars
    .filter(([x]) => x + 5 >= lo && x < hi)
    .map(([x, w, h]) => `<rect x="${x}" y="${base - h}" width="${w}" height="${h}"/>`)
    .join("")}</clipPath>
    <rect x="${lo}" y="${top}" width="${hi - lo}" height="${base - top}" fill="url(#${id}Down)" clip-path="url(#${id}Clip)"/>`;
}

function renderOutputChart() {
  const heights = [1, 2, 6, 12, 23, 41, 64, 95, 131, 165, 200, 227, 241, 246, 239, 226, 205, 179, 154,
    126, 102, 81, 63, 46, 36, 27, 20, 15, 10, 7, 6, 4, 3, 2, 2, 2, 1, 1, 1, 1, 1, 1, 1, 1, 1, 1, 1, 1, 1];
  const step = 6.92;
  const bars = heights.map((h, i) => [95 + (i - 2) * step, step, h]);
  const left = 32, right = 453, top = 65, base = 340;
  let s = defs("o", 0.18);
  s += `<text class="chart-title" x="243" y="24" text-anchor="middle">Portfolio return</text>`;
  s += `<rect x="${left}" y="${top}" width="${right - left}" height="${base - top}" fill="#f4f4f4"/>`;
  s += drawBars("o", bars, base, 131, 244, 80);
  const xs = ["-40%", "-20%", "0%", "20%", "40%", "60%", "80%", "100%"];
  xs.forEach((t, i) => {
    const x = left + 60 * i + 0.5;
    s += `<path d="M${x} ${top}V${base}" stroke="#000" stroke-opacity=".13"/>`;
    s += `<path d="M${x} ${base}v4" stroke="#333"/>`;
    s += `<text transform="translate(${x + 5} ${base + 9}) rotate(-90)" text-anchor="end">${t}</text>`;
  });
  for (let i = 0; i <= 8; i++) {
    const y = Math.round(base - i * 34.4) + 0.5;
    s += `<path d="M${left} ${y}H${right}" stroke="#000" stroke-opacity=".13"/>`;
    s += `<path d="M${left - 4} ${y}h4M${right} ${y}h4" stroke="#333"/>`;
    s += `<text x="${left - 7}" y="${y + 3}" text-anchor="end">${(i / 2).toFixed(1)}</text>`;
    s += `<text x="499" y="${y + 3}" text-anchor="end">${(i * 12.5).toFixed(1)}%</text>`;
  }
  s += `<path d="M${left}.5 ${top}V${base}.5H${right}" fill="none" stroke="#222"/>`;
  s += `<path d="M32 339H86C104 339 118 337 131 325" fill="none" stroke="#5a0a18" stroke-width="2" stroke-dasharray="4 1"/>`;
  s += `<path d="M131 325C155 305 165 248 180 206S214 96 244 77" fill="none" stroke="#6a0a1c" stroke-width="4"/>`;
  s += `<path d="M244 77C262 68 285 65 320 65" fill="none" stroke="#5a0a18" stroke-width="3" stroke-dasharray="5 1"/>`;
  s += `<path d="M320 65H453" fill="none" stroke="#5a0a18" stroke-width="2" stroke-dasharray="5 1"/>`;
  s += `<rect x="32.5" y="47.5" width="421" height="15" fill="#fff" stroke="#222"/>`;
  s += `<rect x="131" y="48" width="113" height="14" fill="#dc143c"/>`;
  s += `<path d="M131.5 47V${base}M244.500 47V${base}" stroke="#555"/>`;
  s += `<path d="M127 43h9v2l-4 7h-1l-4-7zM240 43h9v2l-4 7h-1l-4-7z" fill="#333"/>`;
  s += `<text x="129" y="40" text-anchor="middle">-7.6%</text><text x="242" y="40" text-anchor="middle">30.2%</text>`;
  s += `<text x="81" y="59" text-anchor="middle">5.0%</text><text x="348" y="59" text-anchor="middle">5.0%</text>`;
  s += `<text class="band-label" x="186" y="59" text-anchor="middle">90.0%</text>`;
  document.getElementById("outputChart").innerHTML = s;
}

function renderSheetChart() {
  const left = 33, right = 546, top = 18, base = 298;
  const bars = [
    [59, 14, 3], [73, 13, 2], [86, 14, 3], [100, 13, 12], [113, 13, 33], [126, 14, 47],
  ];
  for (let x = 140; x < 313; x += 13) bars.push([x, Math.min(13, 313 - x), 200]);
  bars.push([313, 13, 66], [326, 13, 48], [339, 13, 37], [352, 13, 25], [365, 14, 18], [379, 13, 14],
    [392, 13, 11], [405, 14, 5], [419, 13, 4], [432, 40, 3], [472, 28, 2], [500, 27, 1], [527, 14, 2]);
  let s = defs("s", 0.34);
  s += `<rect x="${left}" y="${top}" width="${right - left}" height="${base - top}" fill="#f4f4f4"/>`;
  s += `<path d="M0 15.5H546" stroke="#aaa"/>`;
  s += drawBars("s", bars, base, 145, 334, 160);
  const xs = ["-30%", "-20%", "-10%", "0%", "10%", "20%", "30%", "40%", "50%", "60%", "70%"];
  xs.forEach((t, i) => {
    const x = left + 50 * i - 0.5;
    s += `<path d="M${x} ${top}V${base}" stroke="#000" stroke-opacity=".13"/>`;
    s += `<path d="M${x} ${base}v4" stroke="#333"/>`;
    s += `<text transform="translate(${x + 4} ${base + 10}) rotate(-90)" text-anchor="end">${t}</text>`;
  });
  for (let i = 0; i <= 8; i++) {
    const y = base - i * 35 + 0.5;
    s += `<path d="M${left} ${y}H${right}" stroke="#000" stroke-opacity=".13"/>`;
    s += `<path d="M${left - 4} ${y}h4" stroke="#333"/>`;
    if (i < 3) s += `<text x="${left - 8}" y="${y + 3}" text-anchor="end">${(i / 2).toFixed(1)}</text>`;
  }
  s += `<path d="M${left}.5 ${top}V${base}.5H${right}" fill="none" stroke="#333"/>`;
  s += `<path d="M145.5 ${top}V${base}M334.5 ${top}V${base}" stroke="#444"/>`;
  document.getElementById("sheetChart").innerHTML = s;
}

renderSheet();
renderStats();
renderOutputChart();
renderSheetChart();
```
